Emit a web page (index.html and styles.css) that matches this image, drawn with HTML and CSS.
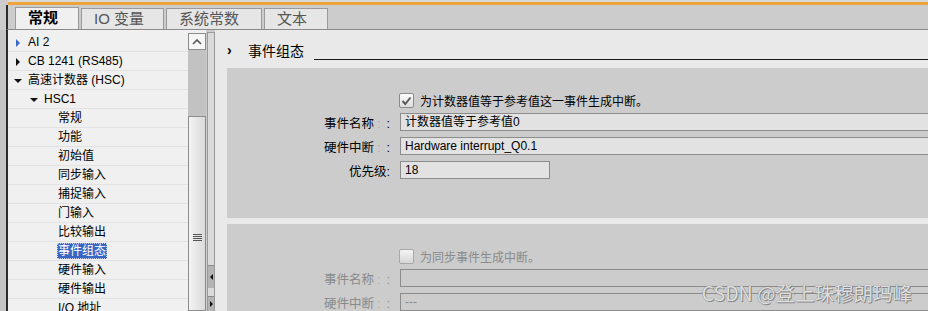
FILE: index.html
```html
<!DOCTYPE html>
<html lang="zh-CN">
<head>
    <meta charset="UTF-8">
    <title>属性 - 事件组态</title>
    <link rel="stylesheet" href="styles.css">
</head>
<body>
    <div class="window">
        <div class="topline"></div>
        <div class="tabbar">
            <div class="tab active">常规</div>
            <div class="tab">IO 变量</div>
            <div class="tab">系统常数</div>
            <div class="tab">文本</div>
        </div>
        <div class="main">
            <div class="edge"></div>

            <!-- navigation tree -->
            <ul class="tree">
                <li class="lvl1"><span class="arrow right blue"></span>AI 2</li>
                <li class="lvl1"><span class="arrow right"></span>CB 1241 (RS485)</li>
                <li class="lvl1"><span class="arrow down"></span>高速计数器 (HSC)</li>
                <li class="lvl2"><span class="arrow down"></span>HSC1</li>
                <li class="lvl3">常规</li>
                <li class="lvl3">功能</li>
                <li class="lvl3">初始值</li>
                <li class="lvl3">同步输入</li>
                <li class="lvl3">捕捉输入</li>
                <li class="lvl3">门输入</li>
                <li class="lvl3">比较输出</li>
                <li class="lvl3"><span class="selected">事件组态</span></li>
                <li class="lvl3">硬件输入</li>
                <li class="lvl3">硬件输出</li>
                <li class="lvl3">I/O 地址</li>
            </ul>

            <div class="vscroll">
                <div class="scroll-up">
                    <svg width="10" height="6" viewBox="0 0 10 6"><path d="M1 5 L5 1 L9 5" fill="none" stroke="#555" stroke-width="1.6"/></svg>
                </div>
                <div class="scroll-track"></div>
                <div class="scroll-thumb">
                    <span class="grip"></span>
                </div>
            </div>

            <div class="splitter">
                <div class="split-btn left"></div>
                <div class="split-btn right"></div>
            </div>

            <!-- property content -->
            <div class="content">
                <div class="section-head">
                    <span class="chevron">›</span>
                    <span class="head-title">事件组态</span>
                    <span class="head-line"></span>
                </div>

                <div class="group">
                    <div class="form">
                        <div class="row check-row">
                            <span class="lbl"></span>
                            <label class="check"><span class="box checked"><svg width="11" height="10" viewBox="0 0 11 10"><path d="M1.5 5 L4.3 8 L9.5 1.5" fill="none" stroke="#5a5a5a" stroke-width="2"/></svg></span>为计数器值等于参考值这一事件生成中断。</label>
                        </div>
                        <div class="row">
                            <span class="lbl">事件名称<span class="faint">:</span>:</span>
                            <div class="field">计数器值等于参考值0</div>
                        </div>
                        <div class="row">
                            <span class="lbl">硬件中断<span class="faint">:</span>:</span>
                            <div class="field">Hardware interrupt_Q0.1</div>
                        </div>
                        <div class="row">
                            <span class="lbl">优先级:</span>
                            <div class="field short">18</div>
                        </div>
                    </div>
                </div>

                <div class="group disabled">
                    <div class="form">
                        <div class="row check-row">
                            <span class="lbl"></span>
                            <label class="check"><span class="box"></span>为同步事件生成中断。</label>
                        </div>
                        <div class="row">
                            <span class="lbl">事件名称<span class="faint">:</span>:</span>
                            <div class="field"></div>
                        </div>
                        <div class="row">
                            <span class="lbl">硬件中断<span class="faint">:</span>:</span>
                            <div class="field">---</div>
                        </div>
                    </div>
                </div>
            </div>
        </div>
        <div class="watermark">CSDN @登上珠穆朗玛峰</div>
    </div>
</body>
</html>
```

FILE: styles.css
```css
body {
    margin: 0;
    padding: 0;
    font-family: "Liberation Sans", "Noto Sans CJK SC", sans-serif;
    font-size: 12px;
    color: #000;
    background: #cccccc;
}

.window {
    position: relative;
    width: 928px;
    height: 311px;
    overflow: hidden;
    display: flex;
    flex-direction: column;
}

.topline {
    height: 2px;
    border-bottom: 3px solid #eea43a;
    background: #d9d9d9;
    margin-left: 8px;
}

.tabbar {
    height: 24px;
    display: flex;
    align-items: flex-end;
    background: #cccccc;
    border-bottom: 1px solid #8a8a8a;
    border-left: 2px solid #2b2b2b;
    margin-left: 6px;
    padding-left: 7px;
}

.tab {
    height: 20px;
    line-height: 20px;
    padding: 0 12px;
    margin-right: 2px;
    font-size: 15px;
    color: #555;
    background: #e6e6e6;
    border: 1px solid #9a9a9a;
    border-bottom: none;
}

.tab:nth-child(1) { width: 38px; }
.tab:nth-child(2) { width: 57px; }
.tab:nth-child(3) { width: 70px; }
.tab:nth-child(4) { width: 38px; }

.tab.active {
    height: 21px;
    font-weight: bold;
    color: #000;
    background: #f0f0f0;
}

.main {
    flex: 1;
    display: flex;
    min-height: 0;
}

.edge {
    width: 6px;
    background: #c4c4c4;
    border-right: 2px solid #2b2b2b;
}

.tree {
    width: 180px;
    margin: 0;
    padding: 3px 0 0 0;
    list-style: none;
    background: #f0f0f0;
}

.tree li {
    height: 18px;
    line-height: 19px;
    border-bottom: 1px solid #e2e2e2;
    white-space: nowrap;
}

.lvl1 { padding-left: 20px; }
.lvl2 { padding-left: 36px; }
.lvl3 { padding-left: 50px; }

.arrow {
    display: inline-block;
    width: 0;
    height: 0;
    vertical-align: middle;
}

.arrow.right {
    border-top: 4px solid transparent;
    border-bottom: 4px solid transparent;
    border-left: 4px solid #111;
    margin-left: -12px;
    margin-right: 8px;
}

.arrow.right.blue { border-left-color: #3a66c4; }

.arrow.down {
    border-left: 4px solid transparent;
    border-right: 4px solid transparent;
    border-top: 4px solid #111;
    margin-left: -14px;
    margin-right: 6px;
}

.selected {
    display: inline-block;
    line-height: 16px;
    padding: 0 1px;
    margin-left: -1px;
    color: #fff;
    background: #3867c3;
    outline: 1px dotted #c8d4ef;
    outline-offset: -1px;
}

.vscroll {
    width: 18px;
    padding-top: 3px;
    background: #f0f0f0;
    display: flex;
    flex-direction: column;
}

.scroll-up {
    height: 15px;
    border: 1px solid #8c8c8c;
    background: #f6f6f6;
    display: flex;
    align-items: center;
    justify-content: center;
}

.scroll-track {
    height: 66px;
    background: #c2c2c2;
}

.scroll-thumb {
    flex: 1;
    border: 1px solid #8c8c8c;
    background: linear-gradient(to right, #f4f4f4, #dadada);
    position: relative;
}

.grip {
    position: absolute;
    left: 4px;
    top: 117px;
    width: 9px;
    height: 7px;
    background: repeating-linear-gradient(to bottom, #555 0, #555 1px, transparent 1px, transparent 2px);
}

.splitter {
    width: 6px;
    margin: 2px 0 0 1px;
    background: #dadada;
    border: 1px solid #9a9a9a;
    border-bottom: none;
    display: flex;
    flex-direction: column;
    justify-content: flex-end;
}

.split-btn {
    height: 22px;
    background: #b4b4b4;
    border-top: 1px solid #8a8a8a;
    display: flex;
    align-items: center;
    justify-content: center;
}

.split-btn.left { margin-bottom: 8px; }
.split-btn.right { height: 14px; }

.split-btn.left::before {
    content: "";
    border-top: 3px solid transparent;
    border-bottom: 3px solid transparent;
    border-right: 3px solid #111;
}

.split-btn.right::before {
    content: "";
    border-top: 3px solid transparent;
    border-bottom: 3px solid transparent;
    border-left: 3px solid #111;
}

.content {
    flex: 1;
    background: #e9e9e9;
    min-width: 0;
}

.section-head {
    height: 38px;
    display: flex;
    align-items: center;
    padding-left: 12px;
}

.chevron {
    width: 21px;
    font-size: 14px;
    font-weight: bold;
    margin-top: 1px;
}

.head-title {
    font-size: 14px;
    margin-top: 2px;
}

.head-line {
    flex: 1;
    height: 1px;
    background: #1a1a1a;
    margin-left: 10px;
    margin-top: 20px;
}

.group {
    margin-left: 12px;
    height: 150px;
    background: #cccccc;
    margin-bottom: 6px;
}

.form {
    padding-top: 25px;
}

.row {
    display: flex;
    align-items: center;
    height: 18px;
    margin-bottom: 6px;
}

.check-row {
    height: 15px;
    margin-bottom: 5px;
}

.lbl {
    width: 173px;
    flex: none;
    text-align: right;
    padding-right: 10px;
    box-sizing: border-box;
    font-size: 12.5px;
    white-space: nowrap;
}

.faint {
    color: #a8a8a8;
    margin: 0 6px 0 3px;
}

.check {
    display: flex;
    align-items: center;
    margin-left: -1px;
    font-size: 12px;
    white-space: nowrap;
}

.box {
    width: 13px;
    height: 13px;
    margin-right: 6px;
    border: 1px solid #8a8a8a;
    border-radius: 2px;
    background: linear-gradient(to bottom, #fdfdfd, #dcdcdc);
    display: flex;
    align-items: center;
    justify-content: center;
}

.field {
    flex: 1;
    height: 16px;
    line-height: 16px;
    padding-left: 4px;
    background: #e2e2e2;
    border: 1px solid #8c8c8c;
    border-right: none;
    white-space: nowrap;
}

.field.short {
    flex: none;
    width: 144px;
    border-right: 1px solid #8c8c8c;
}

.group.disabled {
    height: 90px;
}

.group.disabled .lbl,
.group.disabled .check,
.group.disabled .field {
    color: #8a8a8a;
}

.group.disabled .faint {
    color: #b4b4b4;
}

.group.disabled .field {
    background: #cccccc;
}

.group.disabled .box {
    border-color: #a8a8a8;
    background: linear-gradient(to bottom, #f4f4f4, #d6d6d6);
}

.watermark {
    position: absolute;
    right: 16px;
    bottom: 6px;
    font-family: "Noto Sans CJK SC", sans-serif;
    font-size: 19.5px;
    line-height: 24px;
    color: rgba(240, 240, 240, 0.9);
    text-shadow: 0 0 1px #666, 1px 1px 0 #8c8c8c;
}
```
